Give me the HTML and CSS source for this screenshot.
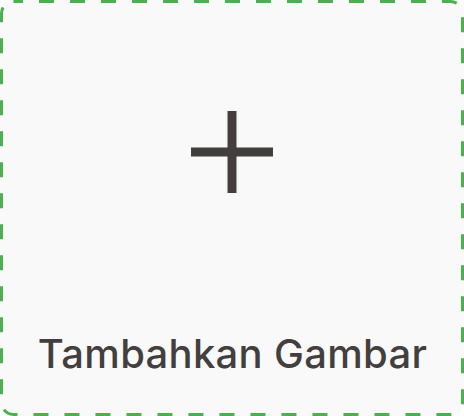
FILE: index.html
```html
<!DOCTYPE html>
<html>
<head>
<meta charset="utf-8">
<link rel="stylesheet" href="styles.css">
</head>
<body>
<div class="card">
  <svg class="frame" width="464" height="416" viewBox="0 0 464 416">
    <rect x="1.5" y="1.5" width="461" height="413" rx="12" ry="12" fill="none" stroke="#4caf50" stroke-width="3" stroke-dasharray="15 16" stroke-dashoffset="5.5"/>
  </svg>
  <div class="icon">
    <svg width="82" height="82" viewBox="0 0 82 82">
      <rect x="36.5" y="0" width="9" height="82" fill="#433f3e"/>
      <rect x="0" y="36.5" width="82" height="9" fill="#433f3e"/>
    </svg>
  </div>
  <div class="label">Tambahkan Gambar</div>
</div>
</body>
</html>
```
FILE: styles.css
```css
html, body {
  margin: 0;
  padding: 0;
  background: #ffffff;
}
.card {
  position: relative;
  width: 464px;
  height: 416px;
  box-sizing: border-box;
  background: #f9f9f9;
  border-radius: 13px;
  display: flex;
  flex-direction: column;
  align-items: center;
}
.frame {
  position: absolute;
  left: 0;
  top: 0;
}
.icon {
  margin-top: 111px;
  width: 82px;
  height: 82px;
  line-height: 0;
}
.label {
  margin-top: 137px;
  margin-left: 1px;
  font-family: "Inter", sans-serif;
  font-size: 40px;
  line-height: 48px;
  letter-spacing: 0.3px;
  color: #433f3e;
  font-weight: 500;
}
```
